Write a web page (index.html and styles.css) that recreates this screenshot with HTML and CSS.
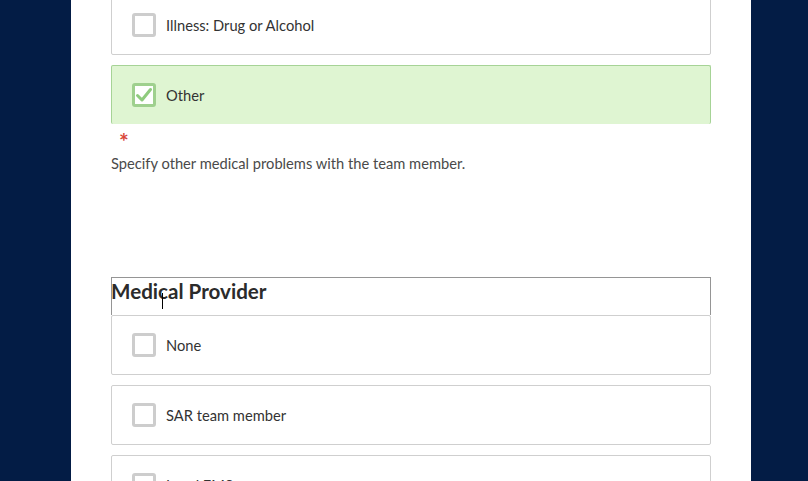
FILE: index.html
```html
<!DOCTYPE html>
<html>
<head>
<meta charset="utf-8">
<link rel="stylesheet" href="styles.css">
</head>
<body>
<div class="page">
  <div class="card first">
    <span class="box"></span>
    <span class="label">Illness: Drug or Alcohol</span>
  </div>
  <div class="card checked">
    <span class="box">
      <svg width="18" height="18" viewBox="0 0 18 18"><path d="M2.5 9.5 L7 14 L15.5 3.5" fill="none" stroke="#8fcb7e" stroke-width="3" stroke-linecap="round" stroke-linejoin="round"/></svg>
    </span>
    <span class="label">Other</span>
  </div>
  <div class="req">*</div>
  <div class="hint">Specify other medical problems with the team member.</div>
  <div class="question">
    <div class="qtitle">Medical Provider<span class="cursor"></span></div>
    <div class="card attached">
      <span class="box"></span>
      <span class="label">None</span>
    </div>
    <div class="card">
      <span class="box"></span>
      <span class="label">SAR team member</span>
    </div>
    <div class="card">
      <span class="box"></span>
      <span class="label">Local EMS</span>
    </div>
  </div>
</div>
</body>
</html>
```
FILE: styles.css
```css
html, body {
  margin: 0;
  padding: 0;
  height: 100%;
  overflow: hidden;
}
body {
  background: #031c45;
  display: flex;
  padding-left: 71px;
  font-family: Lato, "Noto Sans", sans-serif;
  color: #333;
}
.page {
  width: 600px;
  background: #fff;
  padding: 0 40px;
  min-height: 100%;
  display: flex;
  flex-direction: column;
}
.page > *,
.question > * {
  flex-shrink: 0;
}
.card {
  box-sizing: border-box;
  height: 60px;
  border: 1px solid #cfcfcf;
  border-radius: 2px;
  background: #fff;
  display: flex;
  align-items: center;
  padding-left: 20px;
  gap: 10px;
  margin-bottom: 10px;
}
.card.first {
  margin-top: -5px;
}
.card.checked {
  background: #dff5d2;
  border-color: #a6d396;
  border-bottom: none;
  height: 59px;
  margin-bottom: 0;
}
.box {
  box-sizing: border-box;
  width: 24px;
  height: 24px;
  border: 3px solid #cdcdcd;
  border-radius: 3px;
  background: #fff;
  display: flex;
  align-items: center;
  justify-content: center;
}
.checked .box {
  border-color: #9fd08e;
  background: #fff;
}
.label {
  font-size: 14.7px;
  color: #333;
}
.req {
  color: #d9463b;
  font-size: 23px;
  font-weight: 700;
  line-height: 20px;
  height: 22px;
  padding-left: 8px;
  margin-top: 7px;
}
.hint {
  font-size: 14.7px;
  color: #4a4a4a;
  line-height: 20px;
}
.question {
  margin-top: 104px;
  display: flex;
  flex-direction: column;
}
.qtitle {
  position: relative;
  box-sizing: border-box;
  height: 38px;
  border: 1px solid #959595;
  border-bottom: none;
  font-size: 20.6px;
  font-weight: 700;
  color: #2b2b2b;
  line-height: 26px;
  text-indent: -1px;
}
.cursor {
  position: absolute;
  left: 50px;
  top: 15px;
  width: 1px;
  height: 16px;
  background: #000;
}
```
